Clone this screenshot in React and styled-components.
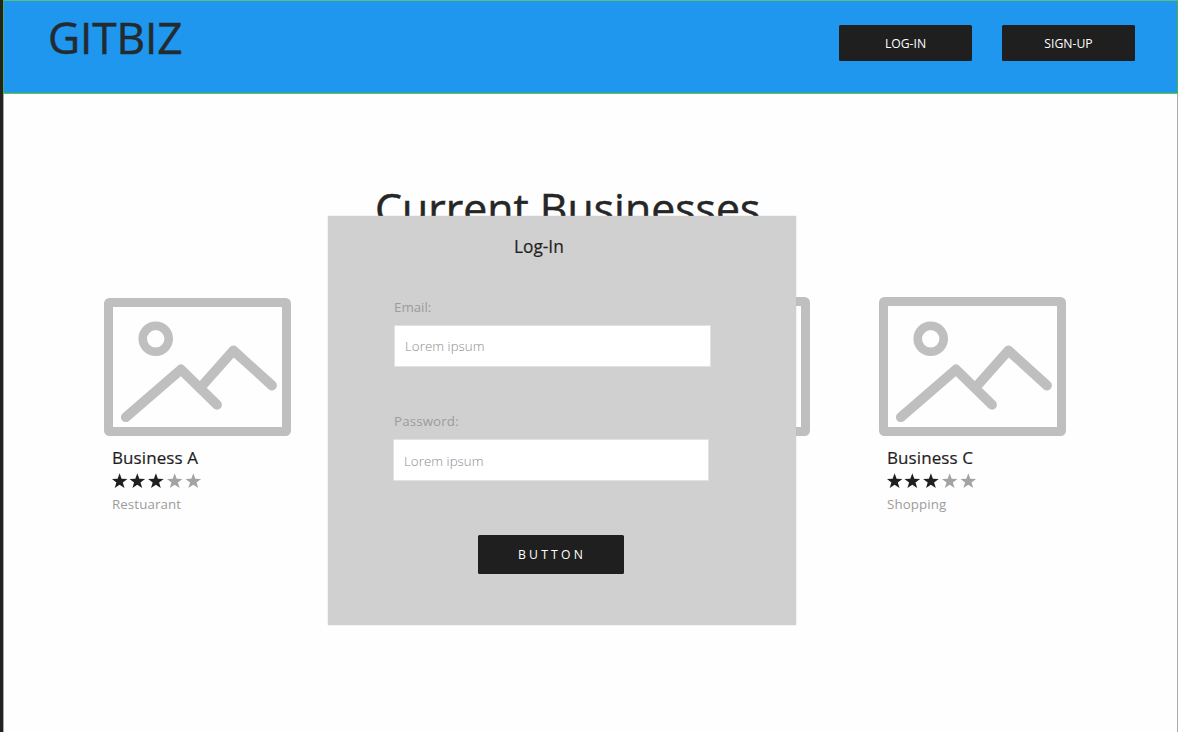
import React from "react";
import styled, { createGlobalStyle } from "styled-components";

const GlobalStyle = createGlobalStyle`
  * { box-sizing: border-box; }
  body { margin: 0; background: #fff; overflow: hidden; }
  button, input { font: inherit; }
`;

const Page = styled.div`
  position: relative;
  height: 732px;
  width: 1178px;
  overflow: hidden;
  display: flex;
  flex-direction: column;
  background: #fefefe;
  color: #1f1f1f;
  font-family: "Open Sans", "Noto Sans", sans-serif;
  border-left: 3px solid #222;
`;

const Header = styled.header`
  height: 94px;
  flex: none;
  display: flex;
  align-items: flex-start;
  justify-content: space-between;
  padding: 0 42px 0 44px;
  background: #1f97ee;
  border: 1px solid #55c080;
  border-right-color: #4caf50;
  border-left-color: #4caf50;
  box-shadow: inset 0 -1px 0 rgba(76, 175, 80, 0.55);
`;

const Logo = styled.div`
  margin-top: 6px;
  font-size: 44.2px;
  line-height: 60px;
  letter-spacing: -0.1px;
  color: #222b30;
  -webkit-text-stroke: 0.5px #222b30;
  white-space: nowrap;
`;

const Nav = styled.nav`
  display: flex;
  gap: 30px;
  margin-top: 24px;
`;

const DarkButton = styled.button`
  width: ${(p) => p.$width}px;
  height: ${(p) => p.$height}px;
  padding: 0;
  border: 0;
  border-radius: 1.5px;
  background: #1f1f1f;
  color: #fff;
  font-size: 12.2px;
  letter-spacing: ${(p) => p.$spacing || 0}px;
  white-space: nowrap;
`;

const Main = styled.main`
  flex: 1;
  border-left: 1px solid #aaa;
  border-right: 1px solid #aaa;
  padding-left: 100px;
`;

const Heading = styled.h1`
  margin: 84px 0 0 271px;
  font-size: 42.8px;
  font-weight: 400;
  line-height: 60px;
  color: #262626;
  -webkit-text-stroke: 0.5px #262626;
  white-space: nowrap;
`;

const Cards = styled.section`
  display: flex;
  align-items: flex-start;
  margin-top: 59px;
`;

const Card = styled.article`
  width: 187px;
  margin-right: ${(p) => p.$after}px;
`;

const Frame = styled.svg`
  display: block;
  width: 187px;
  height: 139px;
`;

const Info = styled.div`
  padding: 10px 0 0 8px;
`;

const Name = styled.div`
  font-size: 17px;
  line-height: 24px;
  letter-spacing: 0.1px;
  -webkit-text-stroke: 0.2px #1f1f1f;
  white-space: nowrap;
`;

const Stars = styled.svg`
  display: block;
  width: 92px;
  height: 16px;
  margin-top: 3px;
`;

const Category = styled.div`
  margin-top: 5px;
  font-size: 13.3px;
  line-height: 20px;
  letter-spacing: 0.1px;
  color: #9c9c9c;
  white-space: nowrap;
`;

const Dialog = styled.form`
  position: absolute;
  left: 325px;
  top: 216px;
  width: 468px;
  height: 409px;
  display: flex;
  flex-direction: column;
  align-items: flex-start;
  padding: 19px 0 0 65px;
  background: #d0d0d0;
  box-shadow: 0 0 1px #bbb;
`;

const Title = styled.h2`
  margin: 0 0 0 121px;
  font-size: 17.3px;
  font-weight: 400;
  line-height: 24px;
  -webkit-text-stroke: 0.2px #1f1f1f;
  white-space: nowrap;
`;

const Field = styled.label`
  display: flex;
  flex-direction: column;
  margin-top: ${(p) => p.$top}px;
`;

const Caption = styled.span`
  margin-left: 1px;
  font-size: 13.3px;
  line-height: 20px;
  letter-spacing: ${(p) => p.$spacing}px;
  color: #9c9c9c;
`;

const Input = styled.input`
  width: ${(p) => p.$width}px;
  height: 42px;
  margin: 8px 0 0 ${(p) => p.$indent}px;
  padding: ${(p) => p.$pad};
  border: 1px solid #e2e2e2;
  border-radius: 0;
  background: #fff;
  font-size: 13.3px;
  font-weight: 300;
  letter-spacing: 0.05px;
  &::placeholder { color: #8c8c8c; opacity: 1; }
`;

const Submit = styled(DarkButton)`
  margin: 54px 0 0 85px;
  padding-left: 2px;
`;

function Picture({ top = 0 }) {
  return (
    <Frame viewBox="0 0 187 139" fill="none" stroke="#bfbfbf">
      <rect x="4.5" y={4.5 + top} width="178" height={130 - top} rx="1" strokeWidth="9" strokeLinejoin="round" />
      <circle cx="51.7" cy="41.8" r="13" strokeWidth="8.6" />
      <g strokeWidth="9.8" strokeLinecap="round" strokeLinejoin="round">
        <path d="M21.8 120.2 L77 72.5 L113 107.8" />
        <path d="M97 90 L129.4 53.5 L168 88.5" />
      </g>
    </Frame>
  );
}

const STAR = "M0 -8 L2 -2.5 L7.8 -2.4 L3.2 1.2 L4.9 6.7 L0 3.4 L-4.9 6.7 L-3.2 1.2 L-7.8 -2.4 L-2 -2.5Z";

function Rating({ value }) {
  return (
    <Stars viewBox="0 0 92 16">
      {[7.6, 25.3, 43.9, 62.7, 81.3].map((x, i) => (
        <path key={x} d={STAR} transform={`translate(${x} 8.3)`} fill={i < value ? "#1f1f1f" : "#a3a3a3"} />
      ))}
    </Stars>
  );
}

function Business({ name, category, top, after }) {
  return (
    <Card $after={after}>
      <Picture top={top} />
      {name && (
        <Info>
          <Name>{name}</Name>
          <Rating value={3} />
          <Category>{category}</Category>
        </Info>
      )}
    </Card>
  );
}

export default function App() {
  return (
    <Page>
      <GlobalStyle />
      <Header>
        <Logo>GITBIZ</Logo>
        <Nav>
          <DarkButton $width={133} $height={36}>LOG-IN</DarkButton>
          <DarkButton $width={133} $height={36}>SIGN-UP</DarkButton>
        </Nav>
      </Header>
      <Main>
        <Heading>Current Businesses</Heading>
        <Cards>
          <Business name="Business A" category="Restuarant" top={1} after={332} />
          <Business after={69} />
          <Business name="Business C" category="Shopping" after={0} />
        </Cards>
      </Main>
      <Dialog>
        <Title>Log-In</Title>
        <Field $top={38}>
          <Caption $spacing={0}>Email:</Caption>
          <Input placeholder="Lorem ipsum" $indent={1} $width={317} $pad="0 10px 1px" />
        </Field>
        <Field $top={44}>
          <Caption $spacing={0.15}>Password:</Caption>
          <Input type="password" placeholder="Lorem ipsum" $indent={0} $width={316} $pad="1px 10px 0" />
        </Field>
        <Submit type="button" $width={146} $height={39} $spacing={3.2}>BUTTON</Submit>
      </Dialog>
    </Page>
  );
}
